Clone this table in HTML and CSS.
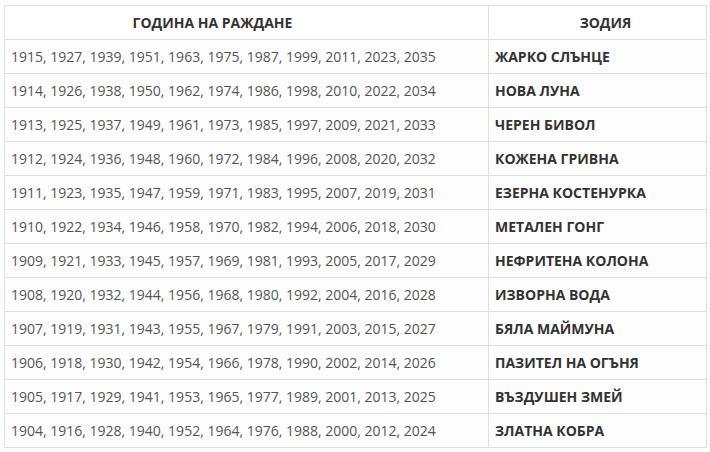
FILE: index.html
```html
<!DOCTYPE html>
<html lang="bg">
<head>
<meta charset="utf-8">
<link rel="stylesheet" href="styles.css">
</head>
<body>
<table class="zodiac">
  <colgroup><col class="c-years"><col class="c-sign"></colgroup>
  <thead>
    <tr><th class="h-years">ГОДИНА НА РАЖДАНЕ</th><th class="h-sign">ЗОДИЯ</th></tr>
  </thead>
  <tbody>
    <tr><td>1915, 1927, 1939, 1951, 1963, 1975, 1987, 1999, 2011, 2023, 2035</td><td class="sign">ЖАРКО СЛЪНЦЕ</td></tr>
    <tr><td>1914, 1926, 1938, 1950, 1962, 1974, 1986, 1998, 2010, 2022, 2034</td><td class="sign">НОВА ЛУНА</td></tr>
    <tr><td>1913, 1925, 1937, 1949, 1961, 1973, 1985, 1997, 2009, 2021, 2033</td><td class="sign">ЧЕРЕН БИВОЛ</td></tr>
    <tr><td>1912, 1924, 1936, 1948, 1960, 1972, 1984, 1996, 2008, 2020, 2032</td><td class="sign">КОЖЕНА ГРИВНА</td></tr>
    <tr><td>1911, 1923, 1935, 1947, 1959, 1971, 1983, 1995, 2007, 2019, 2031</td><td class="sign">ЕЗЕРНА КОСТЕНУРКА</td></tr>
    <tr><td>1910, 1922, 1934, 1946, 1958, 1970, 1982, 1994, 2006, 2018, 2030</td><td class="sign">МЕТАЛЕН ГОНГ</td></tr>
    <tr><td>1909, 1921, 1933, 1945, 1957, 1969, 1981, 1993, 2005, 2017, 2029</td><td class="sign">НЕФРИТЕНА КОЛОНА</td></tr>
    <tr><td>1908, 1920, 1932, 1944, 1956, 1968, 1980, 1992, 2004, 2016, 2028</td><td class="sign">ИЗВОРНА ВОДА</td></tr>
    <tr><td>1907, 1919, 1931, 1943, 1955, 1967, 1979, 1991, 2003, 2015, 2027</td><td class="sign">БЯЛА МАЙМУНА</td></tr>
    <tr><td>1906, 1918, 1930, 1942, 1954, 1966, 1978, 1990, 2002, 2014, 2026</td><td class="sign">ПАЗИТЕЛ НА ОГЪНЯ</td></tr>
    <tr><td>1905, 1917, 1929, 1941, 1953, 1965, 1977, 1989, 2001, 2013, 2025</td><td class="sign">ВЪЗДУШЕН ЗМЕЙ</td></tr>
    <tr><td>1904, 1916, 1928, 1940, 1952, 1964, 1976, 1988, 2000, 2012, 2024</td><td class="sign">ЗЛАТНА КОБРА</td></tr>
  </tbody>
</table>
</body>
</html>
```

FILE: styles.css
```css
html, body {
  margin: 0;
  background: #ffffff;
}
body {
  padding: 5px 4px 0 4px;
  font-family: "Open Sans", "Liberation Sans", sans-serif;
  font-size: 14px;
  color: #555555;
}
.zodiac {
  border-collapse: collapse;
  width: 702px;
  table-layout: fixed;
  background: #fdfdfd;
}
.c-years { width: 484px; }
.c-sign { width: 218px; }
.zodiac th,
.zodiac td {
  border: 1px solid #e0e0e0;
  height: 34px;
  padding: 0 6px;
  line-height: 20px;
  text-align: left;
  white-space: nowrap;
  box-sizing: border-box;
}
.zodiac th {
  text-align: center;
  font-weight: 700;
  color: #333333;
  background: #ffffff;
}
.zodiac th.h-years {
  padding-right: 74px;
}
.zodiac th.h-sign {
  padding-left: 22px;
}
.zodiac td.sign {
  font-weight: 700;
  color: #333333;
}
```
